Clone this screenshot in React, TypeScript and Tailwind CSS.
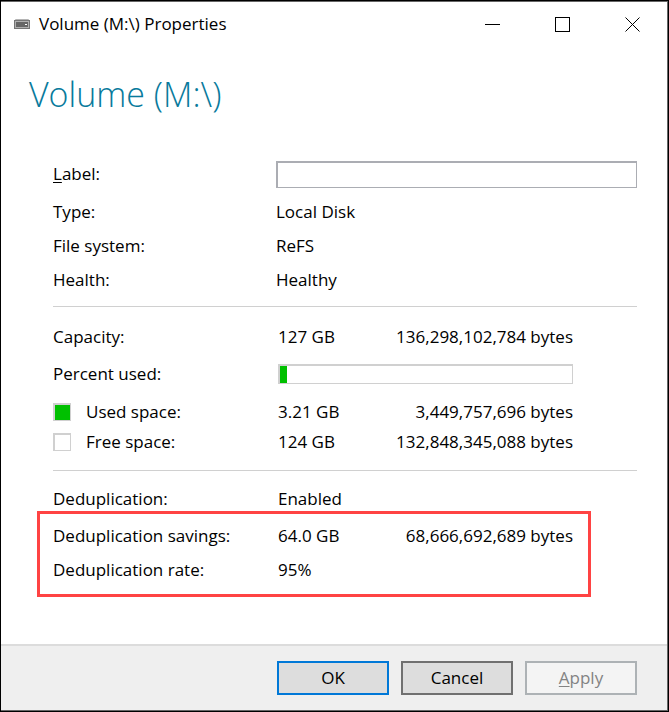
import type { ReactNode } from "react";

function DriveIcon() {
  return (
    <svg width="16" height="10" viewBox="0 0 16 10" aria-hidden="true">
      <path d="M2 0h12l2 2H0z" fill="#b4b4b4" />
      <rect x="0" y="1" width="16" height="9" fill="#757575" />
      <path d="M2 0h12l1 1H1z" fill="#b4b4b4" />
      <rect x="1" y="2" width="14" height="7" fill="#b0b0b0" />
      <rect x="2" y="3" width="12" height="5" fill="#666666" />
      <rect x="11" y="5" width="2" height="1" fill="#ffffff" />
    </svg>
  );
}

function CaptionButton({ label, children }: { label: string; children: ReactNode }) {
  return (
    <button type="button" aria-label={label} className="flex h-11 w-[70px] items-center justify-center hover:bg-gray-200">
      <svg width="15" height="15" viewBox="0 0 15 15" fill="none" stroke="#000" strokeWidth="1" aria-hidden="true">
        {children}
      </svg>
    </button>
  );
}

function Row({ name, value, bytes, className = "h-[34px]" }: { name: ReactNode; value: ReactNode; bytes?: string; className?: string }) {
  return (
    <div className={`flex items-center ${className}`}>
      <dt className="w-[225px] shrink-0">{name}</dt>
      <dd className="flex-1">{value}</dd>
      {bytes && <dd className="whitespace-nowrap">{bytes}</dd>}
    </div>
  );
}

function Swatch({ name, color }: { name: string; color: string }) {
  return (
    <span className="flex items-center gap-[15px]">
      <span className={`size-[18px] border border-t-2 border-l-2 border-[#d0d0d0] ${color}`} />
      {name}
    </span>
  );
}

export default function App() {
  const percentUsed = (3449757696 / 136298102784) * 100;

  return (
    <div className="flex min-h-screen flex-col border border-black bg-white font-['Open_Sans','Noto_Sans',sans-serif] text-[17px] leading-6 text-black">
      <div className="flex flex-1 flex-col border-t border-r border-b border-[#666666]">
        <header className="flex h-11 items-center pl-[13px]">
          <DriveIcon />
          <span className="ml-[9px] flex-1 whitespace-nowrap">Volume (M:\) Properties</span>
          <CaptionButton label="Minimize">
            <path d="M0 7.5h15" />
          </CaptionButton>
          <CaptionButton label="Maximize">
            <rect x="0.5" y="0.5" width="14" height="14" />
          </CaptionButton>
          <CaptionButton label="Close">
            <path d="M0.5 0.5l14 14M14.5 0.5l-14 14" />
          </CaptionButton>
        </header>

        <main className="flex-1 pr-[30px] pb-8 pl-[52px]">
          <h1 className="-ml-6 pt-6 text-[34px] leading-[48px] font-light text-[#087a9c]">Volume (M:\)</h1>

          <div className="mt-[39px] flex h-[34px] items-center">
            <label htmlFor="volume-label" className="w-[223px] shrink-0">
              <span className="underline underline-offset-2">L</span>abel:
            </label>
            <input
              id="volume-label"
              type="text"
              className="h-[27px] min-w-0 flex-1 border border-t-2 border-l-2 border-[#abadb3] bg-white px-1 outline-none"
            />
          </div>

          <dl className="mt-1 border-b border-[#d0d0d0] pb-[9px]">
            <Row name="Type:" value={<span className="-ml-0.5">Local Disk</span>} />
            <Row name="File system:" value={<span className="-ml-0.5">ReFS</span>} />
            <Row name="Health:" value={<span className="-ml-0.5">Healthy</span>} />
          </dl>

          <dl className="border-b border-[#d0d0d0] pt-[13px] pb-[13px]">
            <div className="pr-16">
              <Row name="Capacity:" value="127 GB" bytes="136,298,102,784 bytes" />
              <Row
                className="h-10"
                name="Percent used:"
                value={
                  <div
                    role="progressbar"
                    aria-label="Percent used"
                    aria-valuenow={Math.round(percentUsed)}
                    className="h-5 border border-t-2 border-l-2 border-[#d0d0d0]"
                  >
                    <div className="h-full bg-[#00c000]" style={{ width: `${percentUsed}%` }} />
                  </div>
                }
              />
              <Row className="mt-[3px] h-[30px]" name={<Swatch name="Used space:" color="bg-[#00c000]" />} value="3.21 GB" bytes="3,449,757,696 bytes" />
              <Row className="h-[30px]" name={<Swatch name="Free space:" color="bg-white" />} value="124 GB" bytes="132,848,345,088 bytes" />
            </div>
          </dl>

          <dl className="pt-4">
            <Row className="h-6" name="Deduplication:" value="Enabled" />
            <div className="-ml-4 mr-[46px] border-3 border-[#ff4343] pt-[5px] pr-[15px] pb-[7px] pl-[13px]">
              <Row name="Deduplication savings:" value="64.0 GB" bytes="68,666,692,689 bytes" />
              <Row name="Deduplication rate:" value="95%" />
            </div>
          </dl>
        </main>

        <footer className="flex justify-end gap-3 border-t-2 border-[#dcdcdc] bg-[#efefef] py-[15px] pr-[30px]">
          <button type="button" className="h-[34px] w-28 border-2 border-[#0078d7] bg-[#dddddd]">
            OK
          </button>
          <button type="button" className="h-[34px] w-28 border-2 border-[#707070] bg-[#dddddd]">
            Cancel
          </button>
          <button type="button" disabled className="h-[34px] w-28 border-2 border-[#adb2b5] bg-[#f4f4f4] text-[#838383]">
            <span className="underline underline-offset-2">A</span>pply
          </button>
        </footer>
      </div>
    </div>
  );
}
